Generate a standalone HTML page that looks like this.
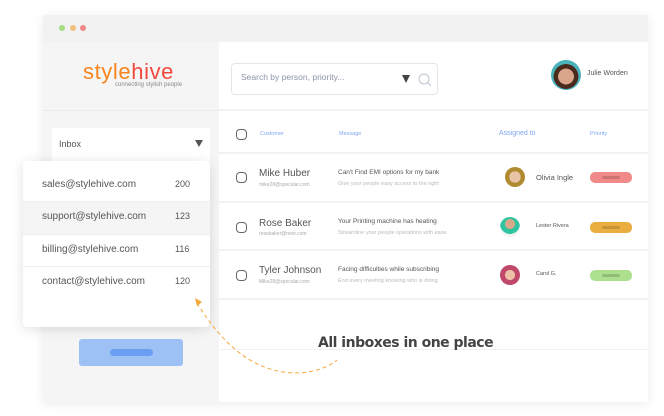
<!DOCTYPE html>
<html><head><style>
*{margin:0;padding:0;box-sizing:border-box}
body{width:664px;height:416px;background:#fff;position:relative;overflow:hidden;font-family:"Liberation Sans",sans-serif;color:#444}
.a{position:absolute}
.win{left:43px;top:15px;width:605px;height:387px;background:#fff;box-shadow:0 2px 10px rgba(0,0,0,.08)}
.cb{width:11px;height:11px;border:1.5px solid #666;border-radius:4px}
.pill{width:42px;height:11px;border-radius:5px}
.pill i{position:absolute;left:12px;top:4px;width:18px;height:3px;border-radius:2px;background:rgba(0,0,0,.15)}
.av{border-radius:50%}
</style></head><body>
<div class="a win"></div>
<div class="a" style="left:43px;top:15px;width:605px;height:27px;background:#f2f2f2"></div>
<div class="a" style="left:59px;top:25px;width:6px;height:6px;border-radius:50%;background:#a6dc82"></div>
<div class="a" style="left:70px;top:25px;width:6px;height:6px;border-radius:50%;background:#f4c07e"></div>
<div class="a" style="left:80px;top:25px;width:6px;height:6px;border-radius:50%;background:#f08787"></div>
<div class="a" style="left:43px;top:42px;width:176px;height:360px;background:#f5f5f5"></div>
<div class="a" style="left:43px;top:110px;width:176px;height:1px;background:#ebebeb"></div>
<div class="a" style="left:83px;top:59px;font-size:22px;letter-spacing:.6px;"><span style="color:#f7841c">style</span><span style="color:#f2493f">hive</span></div>
<div class="a" style="left:115px;top:82px;font-size:6px;color:#888">connecting stylish people</div>
<div class="a" style="left:52px;top:128px;width:158px;height:34px;background:#fff"></div>
<div class="a" style="left:59px;top:139px;font-size:9px;color:#555">Inbox</div>
<div class="a" style="left:195px;top:140px;width:0;height:0;border-left:4px solid transparent;border-right:4px solid transparent;border-top:7px solid #555"></div>
<div class="a" style="left:231px;top:63px;width:207px;height:32px;border:1px solid #e6e6e6;border-radius:4px"></div>
<div class="a" style="left:241px;top:72px;font-size:8.5px;color:#8a93a8">Search by person, priority...</div>
<div class="a" style="left:402px;top:75px;width:0;height:0;border-left:4px solid transparent;border-right:4px solid transparent;border-top:8px solid #444"></div>
<svg class="a" style="left:417px;top:72px" width="16" height="16"><circle cx="7" cy="7" r="5" fill="none" stroke="#bcc3d4" stroke-width="1"/><line x1="10.5" y1="10.5" x2="14" y2="14" stroke="#bcc3d4"/></svg>
<div class="a av" style="left:551px;top:60px;width:30px;height:30px;background:radial-gradient(circle at 50% 55%,#d9a58a 0 35%,#4a2a1c 36% 55%,#49b2bb 56%)"></div>
<div class="a" style="left:587px;top:70px;font-size:7px;color:#555">Julie Worden</div>
<div class="a" style="left:219px;top:109px;width:429px;height:2px;background:#f2f2f2"></div>
<div class="a cb" style="left:236px;top:129px"></div>
<div class="a" style="left:260px;top:131px;font-size:5.5px;color:#7fa6f0">Customer</div>
<div class="a" style="left:339px;top:131px;font-size:5.5px;color:#7fa6f0">Message</div>
<div class="a" style="left:499px;top:130px;font-size:7px;color:#7fa6f0">Assigned to</div>
<div class="a" style="left:590px;top:131px;font-size:5.5px;color:#7fa6f0">Priority</div>
<div class="a" style="left:219px;top:152px;width:429px;height:2px;background:#f2f2f2"></div>
<div class="a" style="left:219px;top:201px;width:429px;height:2px;background:#f2f2f2"></div>
<div class="a" style="left:219px;top:249px;width:429px;height:2px;background:#f2f2f2"></div>
<div class="a" style="left:219px;top:298px;width:429px;height:2px;background:#f2f2f2"></div>
<div class="a" style="left:219px;top:349px;width:429px;height:1px;background:#f2f2f2"></div>
<div class="a cb" style="left:236px;top:172px"></div>
<div class="a" style="left:259px;top:168px;font-size:10px;color:#555">Mike Huber</div>
<div class="a" style="left:259px;top:182px;font-size:5px;color:#aaa">mike28@specular.com</div>
<div class="a" style="left:338px;top:169px;font-size:6.5px;color:#555">Can't Find EMI options for my bank</div>
<div class="a" style="left:338px;top:181px;font-size:5.5px;color:#bbb">Give your people easy access to the right</div>
<div class="a av" style="left:505px;top:167px;width:20px;height:20px;background:radial-gradient(circle,#e8c3a7 0 40%,#b08a30 41%)"></div>
<div class="a" style="left:536px;top:173px;font-size:7.5px;color:#555">Olivia Ingle</div>
<div class="a pill" style="left:590px;top:172px;background:#f08a88"><i></i></div>
<div class="a cb" style="left:236px;top:222px"></div>
<div class="a" style="left:259px;top:218px;font-size:10px;color:#555">Rose Baker</div>
<div class="a" style="left:259px;top:231px;font-size:5px;color:#aaa">rosebaker@next.com</div>
<div class="a" style="left:338px;top:218px;font-size:6.5px;color:#555">Your Printing machine has heating</div>
<div class="a" style="left:338px;top:230px;font-size:5.5px;color:#bbb">Streamline your people operations with ease</div>
<div class="a av" style="left:500px;top:217px;width:20px;height:20px;background:radial-gradient(circle at 50% 35%,#d7a98a 0 30%,#2ec4a0 31% 60%,#f3f3f3 61%)"></div>
<div class="a" style="left:536px;top:223px;font-size:5.5px;color:#555">Lester Rivera</div>
<div class="a pill" style="left:590px;top:222px;background:#e9ae3f"><i></i></div>
<div class="a cb" style="left:236px;top:270px"></div>
<div class="a" style="left:259px;top:265px;font-size:10px;color:#555">Tyler Johnson</div>
<div class="a" style="left:259px;top:279px;font-size:5px;color:#aaa">Mike28@specular.com</div>
<div class="a" style="left:338px;top:266px;font-size:6.5px;color:#555">Facing difficulties while subscribing</div>
<div class="a" style="left:338px;top:278px;font-size:5.5px;color:#bbb">End every meeting knowing who is doing</div>
<div class="a av" style="left:500px;top:265px;width:20px;height:20px;background:radial-gradient(circle,#edc0a8 0 35%,#c0486a 36%)"></div>
<div class="a" style="left:536px;top:271px;font-size:5.5px;color:#555">Carol G.</div>
<div class="a pill" style="left:590px;top:270px;background:#acdf8e"><i></i></div>
<div class="a" style="left:318px;top:335px;font-size:14px;font-weight:bold;color:#444;font-family:'DejaVu Sans',sans-serif;letter-spacing:-.5px">All inboxes in one place</div>
<div class="a" style="left:23px;top:161px;width:187px;height:166px;background:#fff;border-radius:4px;box-shadow:0 2px 12px rgba(0,0,0,.12)"></div>
<div class="a" style="left:23px;top:202px;width:187px;height:32px;background:#f5f5f5"></div>
<div class="a" style="left:23px;top:201px;width:187px;height:1px;background:#eee"></div>
<div class="a" style="left:23px;top:234px;width:187px;height:1px;background:#eee"></div>
<div class="a" style="left:23px;top:266px;width:187px;height:1px;background:#eee"></div>
<div class="a" style="left:42px;top:179px;font-size:10px;color:#555">sales@stylehive.com</div>
<div class="a" style="left:175px;top:179px;font-size:9px;color:#555">200</div>
<div class="a" style="left:42px;top:211px;font-size:10px;color:#555">support@stylehive.com</div>
<div class="a" style="left:175px;top:211px;font-size:9px;color:#555">123</div>
<div class="a" style="left:42px;top:244px;font-size:10px;color:#555">billing@stylehive.com</div>
<div class="a" style="left:175px;top:244px;font-size:9px;color:#555">116</div>
<div class="a" style="left:42px;top:276px;font-size:10px;color:#555">contact@stylehive.com</div>
<div class="a" style="left:175px;top:276px;font-size:9px;color:#555">120</div>
<div class="a" style="left:79px;top:339px;width:104px;height:27px;background:#9dc0f5;border-radius:3px"></div>
<div class="a" style="left:110px;top:349px;width:43px;height:7px;background:#6a9ef2;border-radius:4px"></div>
<svg class="a" style="left:0;top:0" width="664" height="416"><path d="M197 303 C220 340 250 372 295 373 C315 373 330 366 337 360" fill="none" stroke="#f5a83a" stroke-width="1" stroke-dasharray="4 3"/><path d="M195 298 L202 302 L197 306 Z" fill="#f5a83a"/></svg>
</body></html>
